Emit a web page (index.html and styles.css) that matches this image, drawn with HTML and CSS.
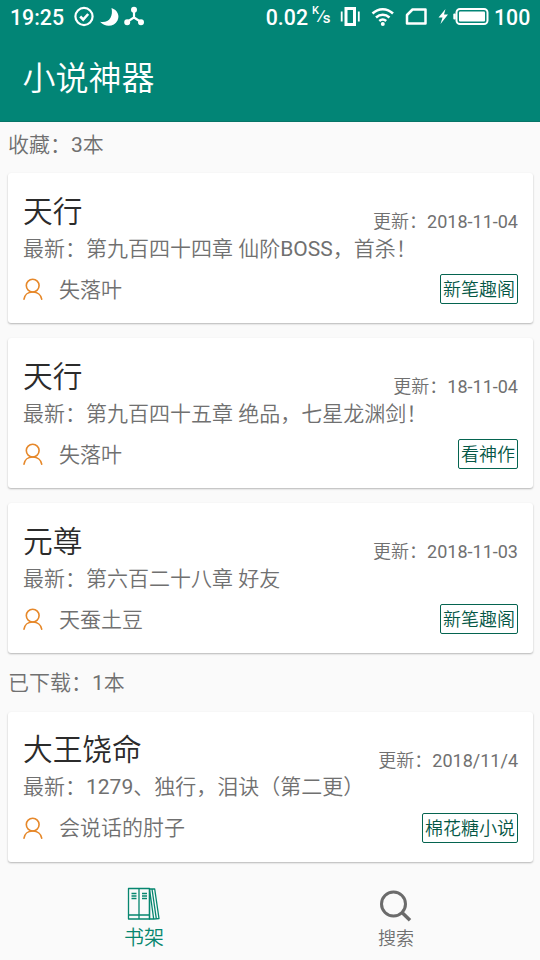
FILE: index.html
```html
<!DOCTYPE html>
<html lang="zh-CN">
<head>
<meta charset="utf-8">
<title>小说神器</title>
<link rel="stylesheet" href="styles.css">
</head>
<body>
<svg class="defs" width="0" height="0" aria-hidden="true">
  <symbol id="user" viewBox="0 0 20 22">
    <g fill="none" stroke="#e6882a" stroke-width="1.600" stroke-linecap="round">
      <circle cx="9.700" cy="7.600" r="6.400"/>
      <path d="M1 21.200C1.500 17 4.800 14 9.700 14s8.400 3 9 7.200"/>
    </g>
  </symbol>
</svg>
<header class="top">
  <div class="status">
    <span class="clock">19:25</span>
    <svg class="notices" width="72" height="22" viewBox="0 0 72 22">
      <g fill="none" stroke="#fff" stroke-width="2.200">
        <circle cx="11" cy="10.500" r="8.600"/>
        <path d="M7.200 10.500l3 3 5-5.500" stroke-width="2.600"/>
      </g>
      <path d="M38.500 2c6 2 8.500 7.500 6 12.500-3 6-12 7.500-17.500 1.200 4.500.8 8.500-.4 10.500-4 1.500-2.800 1.800-6 1-9.700z" fill="#fff"/>
      <g fill="#fff" stroke="#fff" stroke-width="2.200">
        <path d="M61 4v7.500l-7 4.500M61 11.500l7 4.500" fill="none"/>
        <circle cx="61" cy="3.800" r="1.900"/>
        <circle cx="54.200" cy="16.200" r="1.900"/>
        <circle cx="68" cy="16.200" r="1.900"/>
      </g>
    </svg>
    <span class="rate">0.02</span>
    <span class="unit"><span class="unit-k">K</span><span class="unit-slash">/</span><span class="unit-s">s</span></span>
    <svg class="signals" width="150" height="22" viewBox="0 0 150 22">
      <g fill="none" stroke="#fff">
        <path d="M6 2.500h8.500v16H6z" stroke-width="3"/>
        <path d="M1.700 5.500v10M18.800 5.500v10" stroke-width="1.800"/>
        <g stroke-width="2.500">
          <path d="M32.500 7.500c6-5.800 14.500-5.800 20.500 0M36 11.500c4-3.700 9.500-3.700 13.500 0M39.300 15c2.100-1.900 4.800-1.900 6.900 0"/>
        </g>
        <path d="M72.500 3.500h13v14h-18.500V9z" stroke-width="2.500" stroke-linejoin="round"/>
        <rect x="116.500" y="3" width="31" height="15" rx="3.500" stroke-width="2"/>
      </g>
      <g fill="#fff">
        <circle cx="42.800" cy="18" r="2"/>
        <path d="M105.500 3l-7 8.500h4l-2 6.500 7.500-9.500h-4z"/>
        <rect x="119" y="5.500" width="26" height="10" rx="1"/>
        <rect x="113.300" y="7.500" width="2.500" height="6" rx="1"/>
      </g>
    </svg>
    <span class="charge">100</span>
  </div>
  <h1 class="title">小说神器</h1>
</header>
<main class="shelf">
  <h2 class="section">收藏：3本</h2>
  <article class="card">
    <div class="head"><h3 class="name">天行</h3><span class="date">更新：2018-11-04</span></div>
    <p class="latest">最新：第九百四十四章 仙阶BOSS，首杀！</p>
    <div class="foot"><svg class="user"><use href="#user"/></svg><span class="author">失落叶</span><span class="tag">新笔趣阁</span></div>
  </article>
  <article class="card">
    <div class="head"><h3 class="name">天行</h3><span class="date">更新：18-11-04</span></div>
    <p class="latest">最新：第九百四十五章 绝品，七星龙渊剑！</p>
    <div class="foot"><svg class="user"><use href="#user"/></svg><span class="author">失落叶</span><span class="tag">看神作</span></div>
  </article>
  <article class="card">
    <div class="head"><h3 class="name">元尊</h3><span class="date">更新：2018-11-03</span></div>
    <p class="latest">最新：第六百二十八章 好友</p>
    <div class="foot"><svg class="user"><use href="#user"/></svg><span class="author">天蚕土豆</span><span class="tag">新笔趣阁</span></div>
  </article>
  <h2 class="section downloaded">已下载：1本</h2>
  <article class="card">
    <div class="head"><h3 class="name">大王饶命</h3><span class="date">更新：2018/11/4</span></div>
    <p class="latest">最新：1279、独行，泪诀（第二更）</p>
    <div class="foot"><svg class="user"><use href="#user"/></svg><span class="author">会说话的肘子</span><span class="tag">棉花糖小说</span></div>
  </article>
</main>
<nav class="tabs">
  <a class="tab active">
    <svg width="34" height="34" viewBox="0 0 34 34" fill="none" stroke="#06866f" stroke-width="1.300" stroke-linejoin="round">
      <path d="M1.500 1.500h21v30.500h-21zM12 1.500v30.500M1.500 28h21M4.500 6.500h5M4.500 9h5M4.500 11.500h5M15 6.500h5M15 9h5M15 11.500h5"/>
      <path d="M22.500 2h5.200l4.300 29.500-5.300.5zM25 2l4.300 29.700M22.500 2v30h4.200"/>
    </svg>
    <span>书架</span>
  </a>
  <a class="tab">
    <svg width="34" height="34" viewBox="0 0 34 34" fill="none" stroke="#6b6b6b">
      <circle cx="14.500" cy="15" r="12" stroke-width="3"/>
      <path d="M23 23.500l8 7.800" stroke-width="3.500"/>
    </svg>
    <span>搜索</span>
  </a>
</nav>
</body>
</html>
```
FILE: styles.css
```css
* { box-sizing: border-box; }
body {
  margin: 0;
  width: 540px;
  height: 960px;
  display: flex;
  flex-direction: column;
  overflow: hidden;
  background: #fafafa;
  color: #707070;
  font-family: Roboto, "Noto Sans CJK SC DemiLight", "Noto Sans CJK SC", sans-serif;
  font-weight: 400;
}
h1, h2, h3, p { margin: 0; font-weight: 400; white-space: nowrap; }
svg { flex: none; display: block; }
.defs { display: none; }
.top { height: 122px; background: #028576; color: #fff; border-bottom: 1px solid #067568; }
.status {
  display: flex;
  align-items: center;
  height: 34px;
  padding-left: 10px;
  font-size: 21.300px;
  font-weight: 500;
}
.clock { width: 63px; }
.rate { margin-left: auto; }
.unit { display: flex; width: 22px; padding-left: 4px; font-size: 15px; line-height: 14px; }
.unit-k { font-size: 11px; margin-top: -5px; }
.unit-slash { transform: skewX(-14deg); margin: 0 -1px; }
.unit-s { margin-top: 2px; }
.signals { margin-left: 10px; }
.charge { width: 36px; margin: 0 10px 0 4px; text-align: right; }
.title { padding-left: 22.500px; font-size: 33px; line-height: 90px; }
.shelf { padding: 0 7px 0 8px; }
.section { height: 51px; font-size: 21px; line-height: 46px; }
.downloaded { height: 43.600px; line-height: 31px; }
.card {
  height: 150px;
  margin-bottom: 15px;
  padding: 16.500px 15px 0;
  background: #fff;
  border-radius: 3px;
  box-shadow: 0 1px 2px rgba(0, 0, 0, .28);
}
.head { display: flex; justify-content: space-between; height: 44px; }
.name { font-size: 29.700px; line-height: 44px; color: #2b2b2b; }
.date { margin-top: 20.500px; font-size: 18px; line-height: 24px; }
.latest { font-size: 21px; line-height: 30px; }
.foot { display: flex; align-items: center; height: 32px; margin-top: 9.500px; }
.user { width: 20px; height: 22px; }
.author { margin-left: 16px; padding-top: 1.500px; font-size: 21px; line-height: 30px; }
.tag {
  height: 30px;
  margin-left: auto;
  padding: 0 2px;
  border: 1.500px solid #056450;
  border-radius: 2px;
  color: #045746;
  font-size: 18px;
  line-height: 29px;
}
.tabs { display: flex; justify-content: space-between; padding: 10px 110px 0; }
.tab { display: flex; flex-direction: column; align-items: center; width: 68px; font-size: 18px; line-height: 36px; }
.tab svg { margin-bottom: -1px; }
.tab:last-child svg { margin: 2px 0 -2px; }
.active { color: #06866f; font-size: 20px; }
```
